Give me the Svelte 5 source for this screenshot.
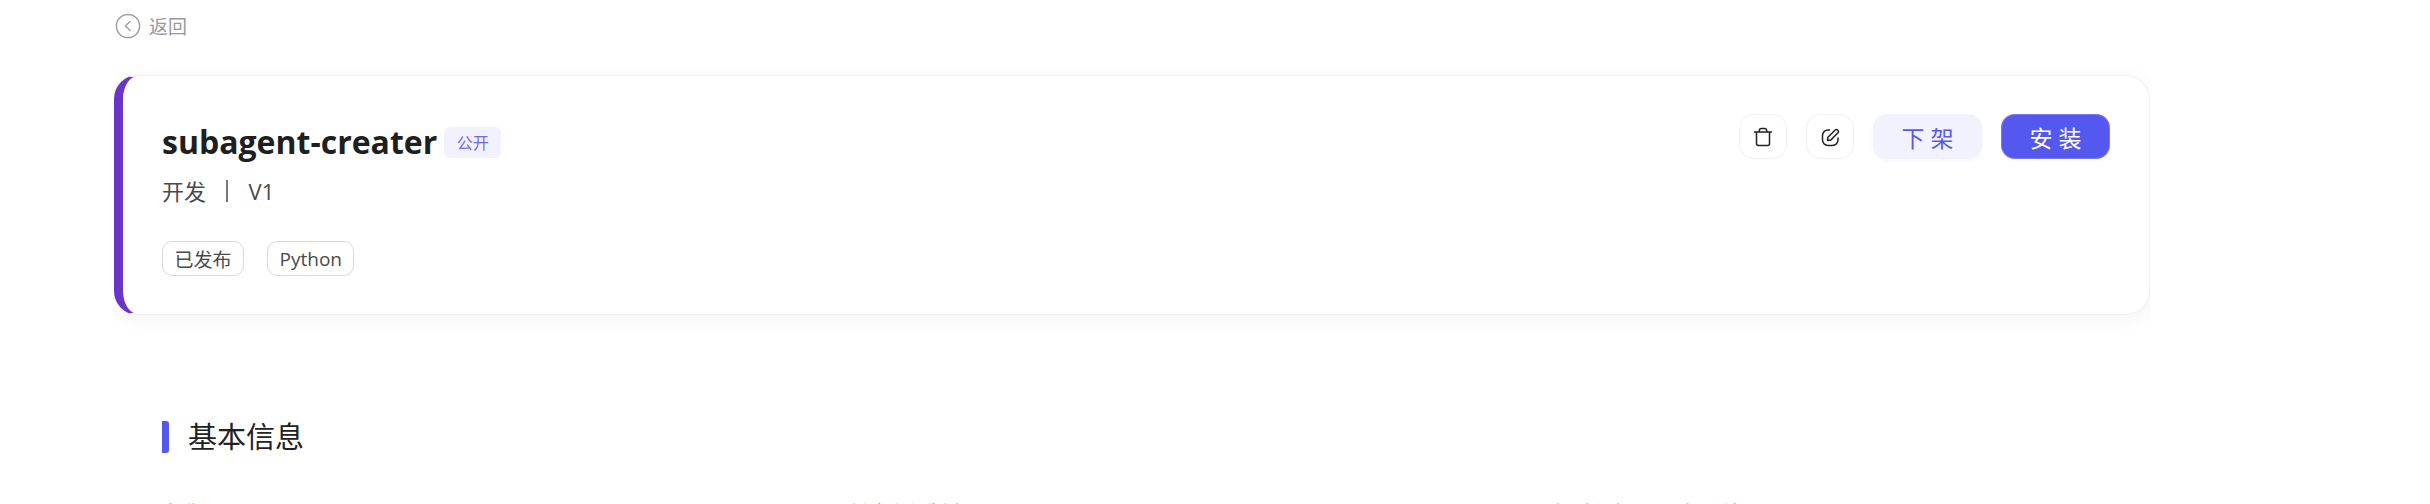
<script>
  const tags = ['已发布', 'Python'];
  const fields = ['名称', '创建人与版本', '最后更新时间及运行环境'];
</script>

<div class="page">
  <a class="back" href="#back">
    <svg width="26" height="26" viewBox="0 0 26 26" fill="none" aria-hidden="true">
      <circle cx="13" cy="13" r="11.6" stroke="#a0a0a0" stroke-width="1.5" />
      <path d="M15 8.500 10.500 13l4.500 4.500" stroke="#a0a0a0" stroke-width="1.500" stroke-linecap="round" stroke-linejoin="round" />
    </svg>
    返回
  </a>

  <!-- Header card -->
  <section class="card">
    <div class="info">
      <div class="title-row">
        <h1>subagent-creater</h1>
        <span class="visibility">公开</span>
      </div>
      <p class="meta">开发<span class="sep"></span>V1</p>
      <div class="tags">
        {#each tags as tag}
          <span class="tag">{tag}</span>
        {/each}
      </div>
    </div>

    <div class="actions">
      <button class="icon-btn" aria-label="删除">
        <svg width="20" height="20" viewBox="0 0 20 20" fill="none" aria-hidden="true">
          <path d="M1.500 5h17M3.500 5v11.500a2 2 0 0 0 2 2h9a2 2 0 0 0 2-2V5M6 5l.5-2.200c.2-.8.700-1.300 1.500-1.300h4c.8 0 1.300.5 1.500 1.300L14 5" stroke="#222" stroke-width="1.500" stroke-linecap="round" stroke-linejoin="round" />
        </svg>
      </button>
      <button class="icon-btn" aria-label="编辑">
        <svg width="20" height="20" viewBox="0 0 20 20" fill="none" aria-hidden="true">
          <path d="M9.500 3H8A5.500 5.500 0 0 0 2.500 8.500V13A5.500 5.500 0 0 0 8 18.500h4.500A5.500 5.500 0 0 0 18 13v-2" stroke="#222" stroke-width="1.500" stroke-linecap="round" />
          <path d="M7.500 13.500l.4-3.200 7.300-7.300a2 2 0 0 1 2.800 2.800l-7.300 7.300z" stroke="#222" stroke-width="1.500" stroke-linejoin="round" />
        </svg>
      </button>
      <button class="btn soft">下 架</button>
      <button class="btn primary">安 装</button>
    </div>
  </section>

  <!-- Basic info -->
  <section class="basic">
    <h2><span class="bar"></span>基本信息</h2>
    <div class="fields">
      {#each fields as field}
        <span class="field">{field}</span>
      {/each}
    </div>
  </section>
</div>

<style>
  :global(body) {
    background: #fff;
    overflow: hidden;
  }

  .page {
    width: 2036px;
    margin-left: 114px;
    height: 504px;
    overflow: hidden;
    font-family: "Open Sans", "Noto Sans CJK SC", sans-serif;
    color: #222;
  }

  .back {
    display: flex;
    align-items: center;
    gap: 8px;
    height: 26px;
    margin: 13px 0 36px 1px;
    font-size: 19px;
    color: #999;
    text-decoration: none;
  }

  .card {
    display: flex;
    justify-content: space-between;
    height: 240px;
    box-sizing: border-box;
    padding: 38px 39px 0 39px;
    background: #fff;
    border: 1px solid #f0f0f2;
    border-left: 9px solid #6c35c9;
    border-radius: 24px;
    box-shadow: 0 4px 20px rgba(0, 0, 0, 0.05);
  }

  .title-row {
    display: flex;
    align-items: center;
    gap: 7px;
    height: 48px;
    margin-top: 4px;
  }

  h1 {
    margin: 0;
    font-size: 32px;
    font-weight: 700;
    line-height: 48px;
    color: #1f1f1f;
  }

  .visibility {
    display: flex;
    align-items: center;
    height: 31px;
    padding: 0 12.5px;
    font-size: 16px;
    color: #7566e6;
    background: #f1f2fe;
    border-radius: 6px;
  }

  .meta {
    display: flex;
    align-items: center;
    margin: 8px 0 0;
    font-size: 22px;
    line-height: 34px;
    color: #4a4a4a;
  }

  .sep {
    width: 1.5px;
    height: 22px;
    margin: 0 21px 0 20px;
    background: #777;
  }

  .tags {
    display: flex;
    gap: 23px;
    margin-top: 33px;
  }

  .tag {
    display: flex;
    align-items: center;
    height: 35px;
    padding: 0 11.5px;
    box-sizing: border-box;
    font-size: 19px;
    color: #4a4a4a;
    border: 1px solid #d9d9d9;
    border-radius: 10px;
  }

  .actions {
    display: flex;
    gap: 19px;
  }

  .icon-btn {
    display: flex;
    align-items: center;
    justify-content: center;
    width: 48px;
    height: 45px;
    padding: 0;
    background: #fff;
    border: 1px solid #efeff1;
    border-radius: 14px;
  }

  .btn {
    width: 109px;
    height: 45px;
    padding: 0;
    font-family: inherit;
    font-size: 23px;
    border: none;
    border-radius: 14px;
  }

  .soft {
    color: #5558ee;
    background: #f1f2fe;
    box-shadow: 0 2px 4px rgba(85, 88, 238, 0.05);
  }

  .primary {
    color: #fff;
    background: #5558ee;
    box-shadow: inset 0 0 0 1px rgba(255, 255, 255, 0.2);
  }

  .basic {
    padding-left: 48px;
    margin-top: 106px;
  }

  h2 {
    display: flex;
    align-items: center;
    gap: 19px;
    margin: 0;
    height: 32px;
    font-size: 29px;
    font-weight: 400;
    line-height: 32px;
    color: #222;
  }

  .bar {
    width: 7px;
    height: 32px;
    background: #5558ee;
    border-radius: 0 3px 3px 0;
  }

  .fields {
    display: grid;
    grid-template-columns: 685px 675px 1fr;
    margin-top: 46px;
  }

  .field {
    font-size: 20px;
    line-height: 30px;
    color: #888;
  }
</style>
